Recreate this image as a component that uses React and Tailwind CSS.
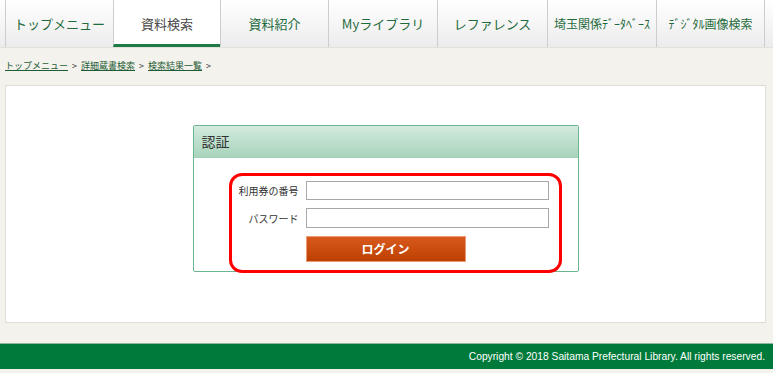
const tabs = [
  { label: 'トップメニュー', w: 'w-[108px]' },
  { label: '資料検索', w: 'w-[107px]', active: true },
  { label: '資料紹介', w: 'w-[108px]' },
  { label: 'Myライブラリ', w: 'w-[109px]' },
  { label: 'レファレンス', w: 'w-[110px]' },
  { label: '埼玉関係ﾃﾞｰﾀﾍﾞｰｽ', w: 'w-[109px]', small: true },
  { label: 'ﾃﾞｼﾞﾀﾙ画像検索', w: 'w-[109px]', small: true },
];

const jp = "font-['Noto_Sans_CJK_JP',sans-serif]";

export default function App() {
  return (
    <div className={`min-h-[373px] w-full bg-[#f3f2ec] ${jp}`}>
      {/* global nav */}
      <nav className="flex h-[47px] bg-gradient-to-b from-white to-[#ececec] pl-[5px] shadow-[0_1px_0_#e2e1da]">
        {tabs.map(({ label, w, active, small }, i) => (
          <a
            key={label}
            href="#"
            className={`flex ${w} items-center justify-center border-l border-[#cdcdcd] leading-none ${
              i === tabs.length - 1 ? 'border-r' : ''
            } ${
              active
                ? 'border-b-[3px] border-b-[#1d7a45] bg-white pt-[3px] text-[#4a4a4a]'
                : 'text-[#1f6b3d]'
            } ${small ? 'text-[12px]' : 'text-[13px]'}`}
          >
            {label}
          </a>
        ))}
      </nav>

      {/* breadcrumb */}
      <div className="flex h-[38px] items-center gap-[4px] pl-[5px] pb-[1px] text-[9px] text-[#333]">
        <a href="#" className="text-[#1f5c35] underline">トップメニュー</a>
        <span>&gt;</span>
        <a href="#" className="text-[#1f5c35] underline">詳細蔵書検索</a>
        <span>&gt;</span>
        <a href="#" className="text-[#1f5c35] underline">検索結果一覧</a>
        <span>&gt;</span>
      </div>

      {/* main panel */}
      <main className="mx-[5px] w-[761px] border border-[#e0ded3] bg-white pt-[39px] pb-[50px]">
        <section className="relative mx-auto w-[386px] rounded-[2px] border border-[#6db591]">
          <header className="flex h-[32px] items-center border-b border-[#a4cfb6] bg-gradient-to-b from-[#d3eadd] to-[#a8d4bb] pl-[8px] text-[14px] text-[#333]">
            認証
          </header>
          <div className="pt-[23px] pb-[9px]">
            <div className="grid grid-cols-[106px_243px] items-center gap-x-[6px] gap-y-[8px] text-[10px] text-[#333]">
              <label className="pr-[1px] text-right">利用券の番号</label>
              <input
                type="text"
                className="h-[19px] border border-[#a8a8a8] bg-white outline-none"
              />
              <label className="pr-[1px] text-right">パスワード</label>
              <input
                type="password"
                className="h-[20px] border border-[#a8a8a8] bg-white outline-none"
              />
              <span />
              <button className="h-[26px] w-[160px] border border-[#ec9a78] bg-gradient-to-b from-[#d8591c] to-[#bd4000] text-[12px] font-bold text-white">
                ログイン
              </button>
            </div>
          </div>

          {/* red annotation */}
          <div className="pointer-events-none absolute left-[35px] top-[47px] h-[100px] w-[333px] rounded-[13px] border-[3px] border-[#ff0000]" />
        </section>
      </main>

      {/* footer */}
      <footer className="mt-[20px] flex h-[26px] items-center justify-end border-t border-[#8fb89d] bg-[#007a3a] pr-[8px] font-['Liberation_Sans',sans-serif] text-[10.25px] text-white">
        Copyright © 2018 Saitama Prefectural Library. All rights reserved.
      </footer>
    </div>
  );
}
